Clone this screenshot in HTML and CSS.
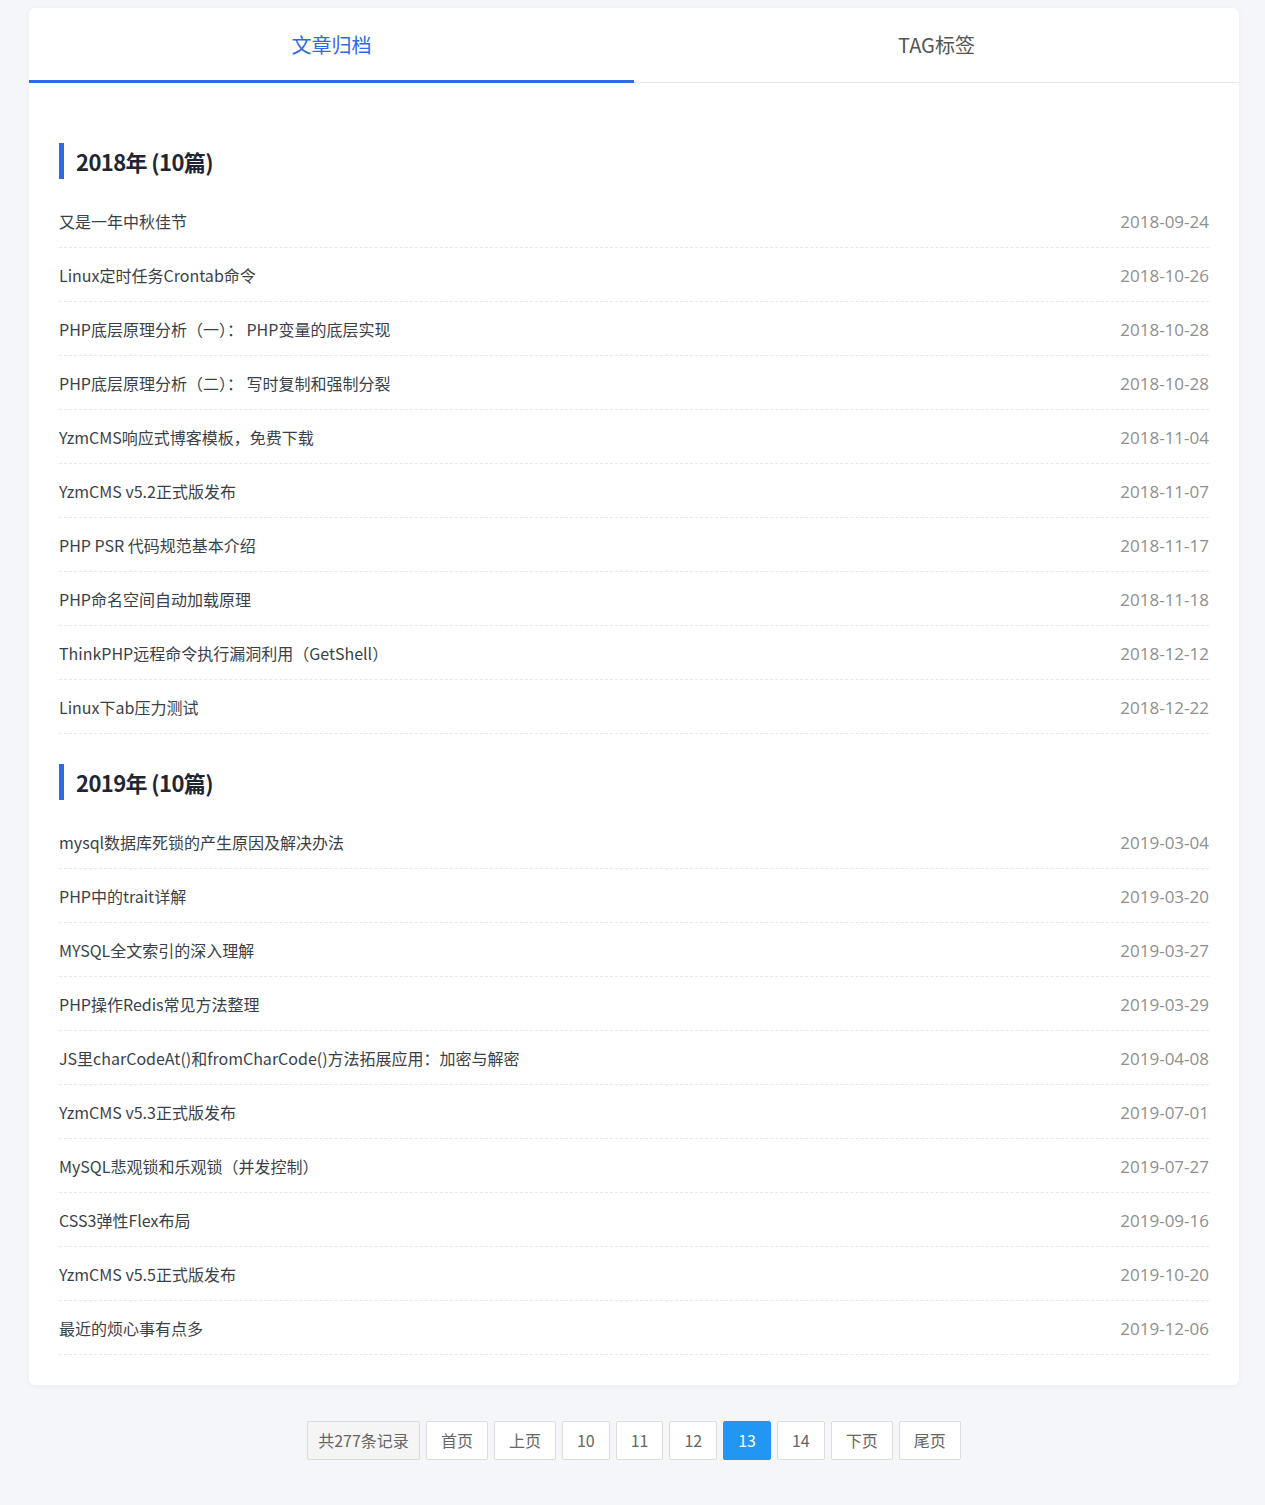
FILE: index.html
```html
<!DOCTYPE html>
<html lang="zh-CN">
<head>
<meta charset="utf-8">
<title>文章归档</title>
<link rel="stylesheet" href="styles.css">
</head>
<body>
<div class="page">
  <div class="card">
    <div class="tabs">
      <div class="tab active">文章归档</div>
      <div class="tab">TAG标签</div>
    </div>
    <div class="content">
      <section class="year">
        <h2 class="year-title">2018年 (10篇)</h2>
        <ul class="list">
          <li><a>又是一年中秋佳节</a><span class="date">2018-09-24</span></li>
          <li><a>Linux定时任务Crontab命令</a><span class="date">2018-10-26</span></li>
          <li><a>PHP底层原理分析（一）： PHP变量的底层实现</a><span class="date">2018-10-28</span></li>
          <li><a>PHP底层原理分析（二）： 写时复制和强制分裂</a><span class="date">2018-10-28</span></li>
          <li><a>YzmCMS响应式博客模板，免费下载</a><span class="date">2018-11-04</span></li>
          <li><a>YzmCMS v5.2正式版发布</a><span class="date">2018-11-07</span></li>
          <li><a>PHP PSR 代码规范基本介绍</a><span class="date">2018-11-17</span></li>
          <li><a>PHP命名空间自动加载原理</a><span class="date">2018-11-18</span></li>
          <li><a>ThinkPHP远程命令执行漏洞利用（GetShell）</a><span class="date">2018-12-12</span></li>
          <li><a>Linux下ab压力测试</a><span class="date">2018-12-22</span></li>
        </ul>
      </section>
      <section class="year">
        <h2 class="year-title">2019年 (10篇)</h2>
        <ul class="list">
          <li><a>mysql数据库死锁的产生原因及解决办法</a><span class="date">2019-03-04</span></li>
          <li><a>PHP中的trait详解</a><span class="date">2019-03-20</span></li>
          <li><a>MYSQL全文索引的深入理解</a><span class="date">2019-03-27</span></li>
          <li><a>PHP操作Redis常见方法整理</a><span class="date">2019-03-29</span></li>
          <li><a>JS里charCodeAt()和fromCharCode()方法拓展应用：加密与解密</a><span class="date">2019-04-08</span></li>
          <li><a>YzmCMS v5.3正式版发布</a><span class="date">2019-07-01</span></li>
          <li><a>MySQL悲观锁和乐观锁（并发控制）</a><span class="date">2019-07-27</span></li>
          <li><a>CSS3弹性Flex布局</a><span class="date">2019-09-16</span></li>
          <li><a>YzmCMS v5.5正式版发布</a><span class="date">2019-10-20</span></li>
          <li><a>最近的烦心事有点多</a><span class="date">2019-12-06</span></li>
        </ul>
      </section>
    </div>
  </div>
  <div class="pager">
    <span class="pg total">共277条记录</span>
    <a class="pg">首页</a>
    <a class="pg">上页</a>
    <a class="pg">10</a>
    <a class="pg">11</a>
    <a class="pg">12</a>
    <span class="pg current">13</span>
    <a class="pg">14</a>
    <a class="pg">下页</a>
    <a class="pg">尾页</a>
  </div>
</div>
</body>
</html>
```
FILE: styles.css
```css
* { box-sizing: border-box; }
html, body { margin: 0; padding: 0; }
body {
  background: #f5f6fa;
  font-family: "Noto Sans CJK SC", sans-serif;
  color: #333;
}
.page {
  padding: 8px 26px 44px 29px;
}
.card {
  background: #fff;
  border-radius: 6px;
  box-shadow: 0 1px 6px rgba(0, 0, 0, 0.04);
  overflow: hidden;
}
.tabs {
  display: flex;
  border-bottom: 1px solid #e8e8e8;
  height: 75px;
}
.tab {
  flex: 1;
  display: flex;
  align-items: center;
  justify-content: center;
  font-size: 20px;
  color: #555;
  margin-bottom: -1px;
  border-bottom: 3px solid transparent;
}
.tab.active {
  color: #2c6ae8;
  border-bottom-color: #2c6ae8;
}
.content {
  padding: 30px 30px 30px 30px;
}
.year-title {
  margin: 30px 0 15px;
  border-left: 5px solid #2c6ae8;
  padding-left: 12px;
  height: 36px;
  line-height: 36px;
  font-size: 22px;
  letter-spacing: -0.6px;
  font-weight: bold;
  color: #1f2633;
}
.list {
  list-style: none;
  margin: 0;
  padding: 0;
}
.list li {
  display: flex;
  justify-content: space-between;
  align-items: center;
  height: 54px;
  padding-top: 1px;
  border-bottom: 1px dashed #e8e8e8;
  font-size: 16px;
}
.list li a {
  color: #3a3f4a;
}
.list li .date {
  color: #8f8f8f;
  font-size: 17px;
  font-family: "Open Sans", sans-serif;
}
.pager {
  display: flex;
  justify-content: center;
  gap: 6px;
  margin-top: 36px;
}
.pg {
  height: 39px;
  line-height: 37px;
  padding: 0 14px;
  min-width: 47px;
  text-align: center;
  border: 1px solid #dcdcdc;
  border-radius: 2px;
  background: #fff;
  color: #666;
  font-size: 16px;
}
.pg.total {
  background: #f5f5f5;
  padding: 0 10px;
}
.pg.current {
  background: #2196f3;
  border-color: #2196f3;
  color: #fff;
}
```
